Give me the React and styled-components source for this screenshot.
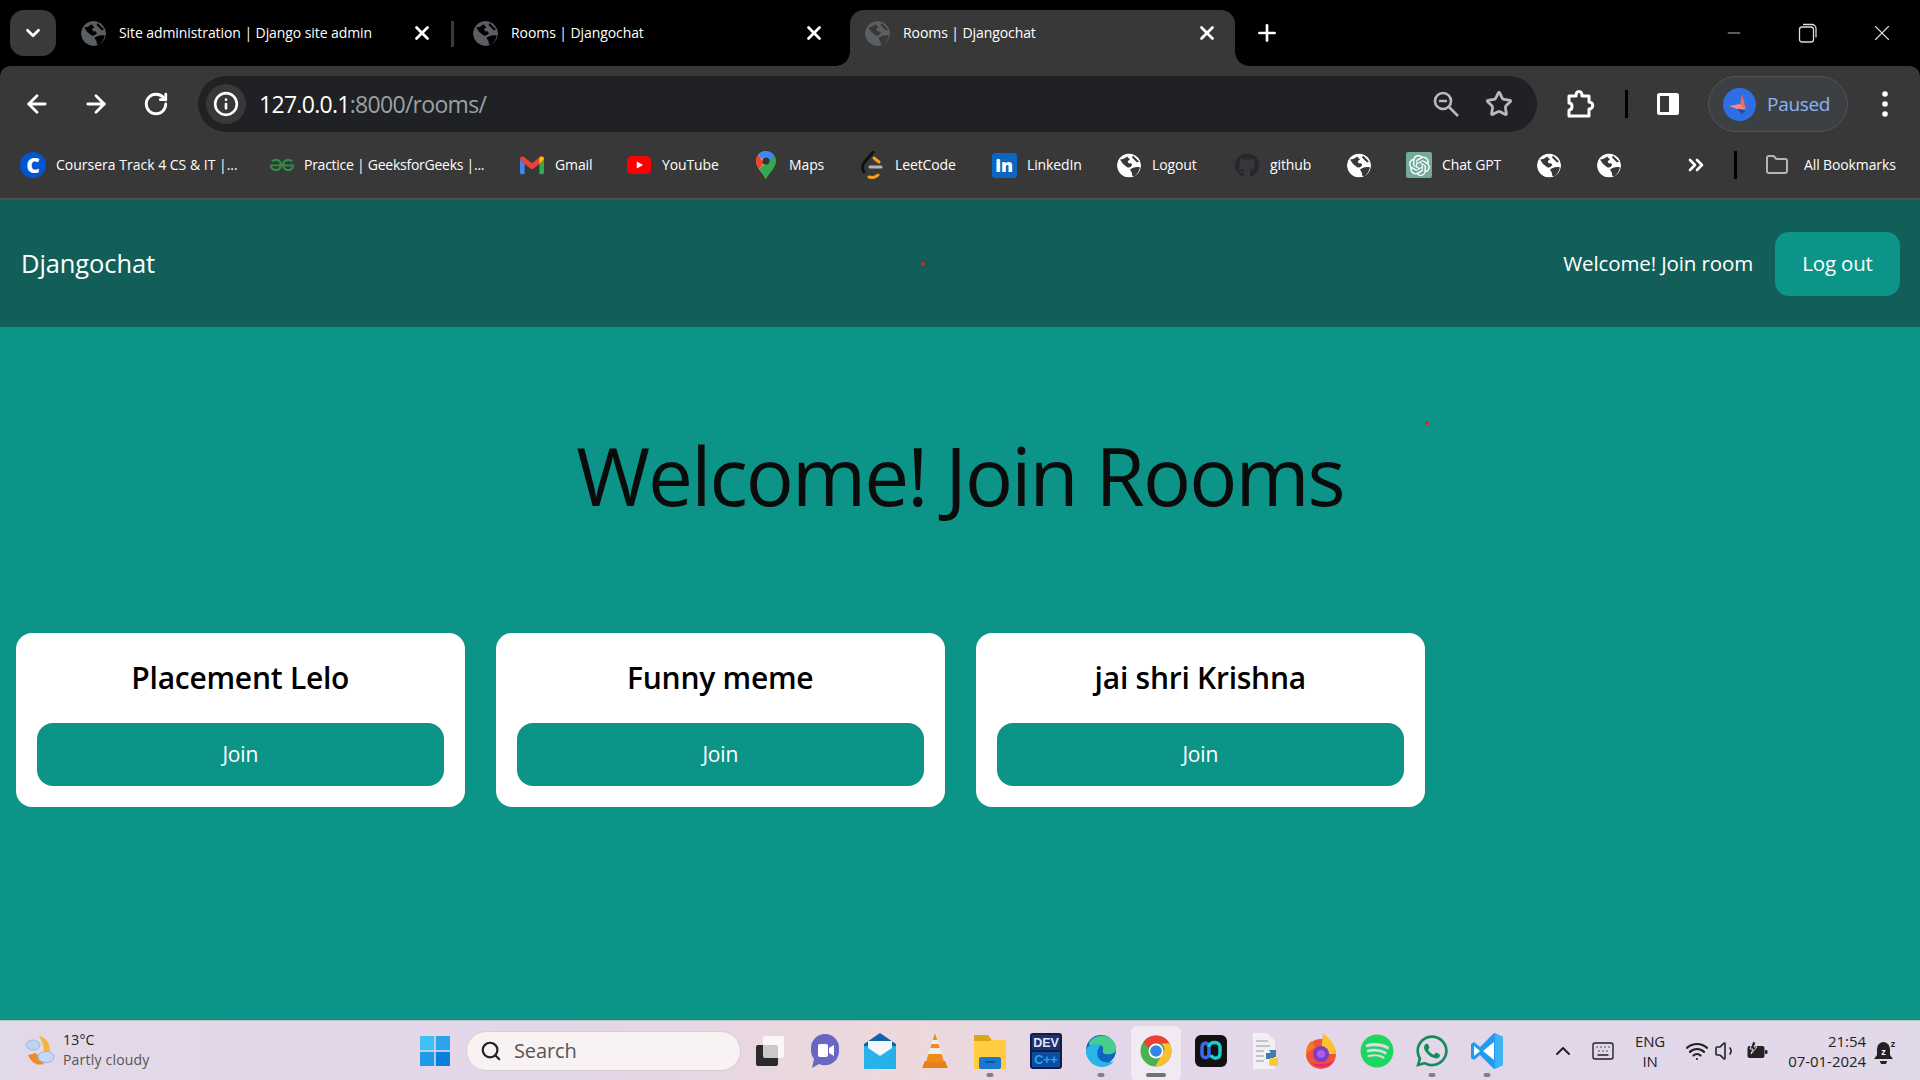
import React from 'react';
import styled, { createGlobalStyle } from 'styled-components';
import { FaGithub, FaWhatsapp, FaSpotify } from 'react-icons/fa6';
import { SiOpenai, SiGeeksforgeeks } from 'react-icons/si';
import { LuArrowLeft, LuArrowRight, LuRotateCw, LuX, LuPlus, LuMinus, LuSearch, LuStar, LuChevronsRight, LuFolder, LuChevronDown, LuChevronUp, LuInfo, LuVolume1, LuWifi, LuKeyboard } from 'react-icons/lu';

const UI = '"Open Sans", "Noto Sans", sans-serif';
const Global = createGlobalStyle`
  html, body { margin: 0; padding: 0; width: 1920px; height: 1080px; overflow: hidden; background: #000; }
  * { box-sizing: border-box; }
  body { font-family: ${UI}; }
`;
const Screen = styled.div`display:flex;flex-direction:column;width:1920px;height:1080px;position:relative;overflow:hidden;background:#000;`;
const TabStrip = styled.div`display:flex;align-items:flex-start;height:66px;background:#000;padding:10px 0 0 10px;flex:none;`;
const TabMenu = styled.div`width:46px;height:46px;border-radius:14px;background:#3a3a3a;color:#fff;display:flex;align-items:center;justify-content:center;margin-right:10px;flex:none;`;
const Tab = styled.div`
  width:${p => p.$w}px;height:56px;display:flex;align-items:center;padding:0 ${p => p.$active ? 17 : 25}px 10px 15px;color:#fff;font:14px/1 ${UI};letter-spacing:-.08px;flex:none;position:relative;
  background:${p => p.$active ? '#383838' : 'transparent'};border-radius:14px 14px 0 0;
  ${p => p.$sep ? `&::after{content:"";position:absolute;right:4px;top:11px;width:3px;height:26px;background:#3a3a3a;}` : ''}
  ${p => p.$active ? `
    &::before{content:"";position:absolute;left:-14px;bottom:0;width:14px;height:14px;background:radial-gradient(circle at 0 0,transparent 13.5px,#383838 14px);}
    &::after{content:"";position:absolute;right:-14px;bottom:0;width:14px;height:14px;background:radial-gradient(circle at 100% 0,transparent 13.5px,#383838 14px);}
  ` : ''}
`;
const TabIcon = styled.span`display:flex;color:#5b5e63;margin-right:13px;flex:none;`;
const TabTitle = styled.span`flex:1;white-space:nowrap;`;
const TabNew = styled.div`width:64px;height:46px;display:flex;align-items:center;justify-content:center;color:#fff;`;
const WindowControls = styled.div`display:flex;margin-left:auto;height:46px;align-items:center;color:#ddd;padding-right:1px;`;
const WinBtn = styled.div`width:74px;display:flex;justify-content:center;`;
const Toolbar = styled.div`height:66px;background:#383838;border-radius:10px 10px 0 0;display:flex;align-items:flex-start;padding:10px 0 0 7px;flex:none;`;
const NavIcon = styled.div`width:59.500px;height:56px;display:flex;align-items:center;justify-content:center;color:#fff;flex:none;`;
const Omni = styled.div`margin-left:12.500px;width:1339px;height:56px;background:#202124;border-radius:28px;display:flex;align-items:center;padding:0 12px 0 8px;flex:none;`;
const InfoBadge = styled.div`width:40px;height:40px;border-radius:50%;background:#383838;display:flex;align-items:center;justify-content:center;color:#fff;flex:none;`;
const Url = styled.div`margin-left:13px;font:23px/1 ${UI};letter-spacing:-.7px;color:#fff;flex:1;span{color:#9aa0a6;}`;
const OmniIcon = styled.div`width:53px;display:flex;justify-content:center;color:#b9b9b9;flex:none;`;
const ToolIcon = styled.div`width:${p => p.$w || 44}px;height:56px;display:flex;align-items:center;justify-content:center;color:#fff;flex:none;`;
const ToolSep = styled.div`width:3px;height:28px;background:#000;flex:none;margin-top:14px;`;
const BarSep = styled.div`width:3px;height:28px;background:#000;flex:none;`;
const Paused = styled.div`width:140px;height:56px;border-radius:28px;background:#3c4043;border:1.5px solid #50535a;display:flex;align-items:center;padding-left:14px;gap:11px;color:#8ab4f8;font:19px/1 ${UI};letter-spacing:-.3px;flex:none;`;
const Avatar = styled.div`width:33px;height:33px;border-radius:50%;background:#2f6fe4;display:flex;align-items:center;justify-content:center;flex:none;`;
const Bookmarks = styled.div`height:68px;background:#383838;border-bottom:2px solid #4f4f4f;display:flex;align-items:center;padding-left:21px;flex:none;`;
const Mark = styled.div`display:flex;align-items:center;gap:${p => p.$gap ?? 11}px;width:${p => p.$w}px;margin-left:${p => p.$ml || 0}px;flex:none;color:#fff;font:14px/1 ${UI};letter-spacing:${p => p.$ls ?? -0.12}px;white-space:nowrap;`;
const MarkIcon = styled.span`width:24px;height:24px;display:flex;align-items:center;justify-content:center;color:${p => p.$c || '#fff'};flex:none;`;
const Tile = styled.span`min-width:${p => p.$s || 24}px;height:${p => p.$s || 24}px;display:flex;align-items:center;justify-content:center;background:${p => p.$bg};border-radius:${p => p.$r || 3}px;color:#fff;font:800 ${p => p.$f || 17}px/1 ${UI};`;
const Nav = styled.header`height:127px;background:#125f5a;display:flex;align-items:center;padding:0 20px 0 21px;color:#fff;flex:none;`;
const Brand = styled.div`font:25.500px/1 ${UI};letter-spacing:-.1px;flex:1;`;
const NavLink = styled.div`font:20.500px/1 ${UI};letter-spacing:-.12px;margin-right:22px;`;
const LogOut = styled.div`width:125px;height:64px;background:#0d9488;border-radius:14px;display:flex;align-items:center;justify-content:center;font:20.500px/1 ${UI};letter-spacing:-.2px;`;
const Main = styled.main`flex:1;background:#0d9488;display:flex;flex-direction:column;padding:0 16px;`;
const Heading = styled.h1`margin:108px 0 0;height:198px;text-align:center;font:400 80px/1 ${UI};letter-spacing:-1.9px;color:#0b0b0b;`;
const Grid = styled.div`display:grid;grid-template-columns:repeat(4,448.500px);gap:31.500px;`;
const Card = styled.div`background:#fff;border-radius:16px;padding:20px 21px;height:174px;display:flex;flex-direction:column;`;
const CardTitle = styled.h2`margin:0;height:70px;text-align:center;font:600 30px/49px ${UI};letter-spacing:-.25px;color:#000;`;
const Join = styled.div`height:63px;border-radius:16px;background:#0d9488;color:#fff;display:flex;align-items:center;justify-content:center;font:21px/1 ${UI};letter-spacing:-.2px;`;
const Dot = styled.i`position:absolute;left:${p => p.$x}px;top:${p => p.$y}px;width:4px;height:4px;border-radius:50%;background:#d8222a;`;
const Taskbar = styled.footer`height:60px;background:linear-gradient(90deg,#e2d9e8 0%,#e3d6e8 30%,#edd9dc 47%,#e3d6e8 58%,#e1d8e8 100%);border-top:1px solid #b9c2c2;display:flex;align-items:center;position:relative;flex:none;`;
const Weather = styled.div`width:418px;padding-left:25px;display:flex;gap:6px;align-items:center;flex:none;`;
const WeatherText = styled.div`font:14px/20px ${UI};letter-spacing:.2px;color:#222;margin-top:-2px;small{display:block;font-size:14px;color:#555;}`;
const WinLogo = styled.div`width:33px;height:60px;display:flex;align-items:center;justify-content:center;flex:none;`;
const Search = styled.div`width:275px;height:40px;border-radius:20px;background:#f8f2f3;border:1px solid #d7cdd3;display:flex;align-items:center;gap:12px;padding-left:13px;color:#555;font:20px/1 ${UI};letter-spacing:-.1px;margin-left:15px;flex:none;`;
const Dock = styled.div`display:flex;margin-left:1px;flex:none;`;
const DockItem = styled.div`width:55.200px;height:60px;display:flex;align-items:center;justify-content:center;position:relative;flex:none;`;
const ActiveBg = styled.div`position:absolute;inset:5px 3px 0 3px;background:#f1eaf2;border-radius:6px;`;
const DockGlyph = styled.span`position:relative;display:flex;`;
const Indicator = styled.b`position:absolute;bottom:4px;left:50%;transform:translateX(-50%);width:${p => p.$wide ? 20 : 7}px;height:4px;border-radius:2px;background:${p => p.$wide ? '#6d7478' : '#7d8286'};`;
const Tray = styled.div`position:absolute;right:22px;top:0;height:60px;display:flex;align-items:center;color:#222;font:15px/20px ${UI};`;
const TrayIcon = styled.div`width:${p => p.$w}px;display:flex;justify-content:center;flex:none;`;
const Lang = styled.div`width:64px;text-align:center;letter-spacing:-.2px;flex:none;`;
const Clock = styled.div`width:92px;text-align:right;flex:none;letter-spacing:-.05px;margin-right:6px;`;
const Bell = styled.div`width:26px;display:flex;justify-content:center;flex:none;`;

const Globe = ({ size = 25, id = 'g' }) => (
  <svg width={size} height={size} viewBox="0 0 24 24">
    <mask id={id}>
      <circle cx="12" cy="12" r="12" fill="#fff" />
      <path d="M3 6c3 0 5-1 7-3l3 3c-2 1-3 2-1 4 3-1 4 2 2 3-2 2-4 1-6-1-2-1-3-3-5-6zM13 16c3-2 6-3 10-2-1 4-3 7-6 9-2 0-2-2-2-3s-1-2-2-4zM16 2l6 6-2 1-2-2-3-3z" fill="#000" />
    </mask>
    <circle cx="12" cy="12" r="12" fill="currentColor" mask={`url(#${id})`} />
  </svg>
);
const Win = () => <svg width="30" height="30" viewBox="0 0 30 30"><rect width="14.200" height="14.200" fill="#3fc0f5"/><rect x="15.800" width="14.200" height="14.200" fill="#2aa5ec"/><rect y="15.800" width="14.200" height="14.200" fill="#1b9be8"/><rect x="15.800" y="15.800" width="14.200" height="14.200" fill="#0a7fdc"/></svg>;
const Gmail = () => <svg width="26" height="22" viewBox="0 0 26 20"><path d="M0 4v14q0 2 2 2h3V9z" fill="#4285f4"/><path d="M26 4v14q0 2-2 2h-3V9z" fill="#34a853"/><path d="M5 9 0 4q0-4 4-3l9 7 9-7q4-1 4 3l-5 5-8 6z" fill="#ea4335"/><path d="M21 9l5-5q0-4-4-3l-1 .8z" fill="#fbbc04"/></svg>;
const Youtube = () => <svg width="27" height="20" viewBox="0 0 27 20"><rect width="27" height="20" rx="5" fill="#f00"/><path d="M11 6l7 4-7 4z" fill="#fff"/></svg>;
const Maps = () => <svg width="22" height="28" viewBox="0 0 22 28"><path d="M11 28C8 22 1 17 1 10A10 10 0 0 1 11 0z" fill="#fbbc04"/><path d="M11 28c3-6 10-11 10-18 0-2-.6-4-1.700-5.500L4 18c3 4 6 7 7 10z" fill="#34a853"/><path d="M11 0a10 10 0 0 1 8.300 4.500L14 10a3.500 3.500 0 0 0-3-3.500L7 3z" fill="#4285f4"/><path d="M11 0A10 10 0 0 0 3 4l4 4 4-2z" fill="#4285f4"/><path d="M3 4a10 10 0 0 0-2 6c0 3 1.500 6 3 8l5-6-3-4z" fill="#ea4335"/><circle cx="11" cy="10" r="3.500" fill="#333"/></svg>;
const Leet = () => <svg width="24" height="28" viewBox="0 0 24 28" fill="none" strokeLinecap="round"><path d="M13 1 4 12c-2 3-2 6 0 9" stroke="#111" strokeWidth="3"/><path d="M14 7l5 4" stroke="#f89f1b" strokeWidth="3"/><path d="M9 26c3 1 6 1 9-2" stroke="#f89f1b" strokeWidth="3"/><path d="M10 16h11" stroke="#b3b3b3" strokeWidth="3"/></svg>;
const Puzzle = () => <svg width="30" height="32" viewBox="0 0 30 32" fill="none" stroke="#fff" strokeWidth="3" strokeLinejoin="round"><path d="M3 8h7c0-6 6-6 6 0h7v6c5 0 5 7 0 7v7H3v-6c4 0 4-7 0-7z"/></svg>;
const ZoomOut = () => <svg width="28" height="28" viewBox="0 0 28 28" fill="none" stroke="#b9b9b9" strokeWidth="2.600"><circle cx="11" cy="11" r="8"/><path d="M7 11h8M17 17l9 9"/></svg>;
const Dots = () => <svg width="10" height="28" viewBox="0 0 10 28" fill="#fff"><circle cx="5" cy="4" r="2.800"/><circle cx="5" cy="14" r="2.800"/><circle cx="5" cy="24" r="2.800"/></svg>;
const Butterfly = () => <svg width="26" height="26" viewBox="0 0 26 26"><path d="M15 3l4 15-6-3z" fill="#f2685c"/><path d="M2 15l11-2 6 6-9-1z" fill="#f58a7c"/><path d="M10 18l9 1-4 4z" fill="#1c49a8"/></svg>;
const Split = () => <svg width="24" height="24" viewBox="0 0 24 24"><rect x="1" y="1" width="22" height="22" rx="2.500" fill="#fff"/><rect x="4" y="4" width="9" height="16" fill="#383838"/></svg>;
const Weath = () => <svg width="32" height="36" viewBox="0 0 32 36"><path d="M14 3c14 2 16 26-3 29C22 26 20 12 14 3z" fill="#f5b53a"/><path d="M3 22c3 8 10 11 16 9L11 20z" fill="#ec8b2c"/><ellipse cx="8" cy="12" rx="7" ry="5" fill="#bcd4f0" stroke="#9bbbe0"/><ellipse cx="21" cy="24" rx="8" ry="5.500" fill="#c4daf3" stroke="#94b7e0"/></svg>;
const TaskView = () => <svg width="30" height="32" viewBox="0 0 30 32"><rect x="1" y="10" width="22" height="21" rx="2" fill="#2a2a2a"/><rect x="8" y="1" width="21" height="22" rx="2" fill="#fff" fillOpacity=".75"/></svg>;
const Chat = () => <svg width="30" height="36" viewBox="0 0 30 36"><path d="M15 1a14 14 0 0 1 14 14v4a14 14 0 0 1-20 12l-7 4 2-9a14 14 0 0 1-3-7v-4A14 14 0 0 1 15 1z" fill="#6a67c4"/><rect x="8" y="11" width="10" height="13" rx="2" fill="#fff"/><path d="M19 15l5-3v11l-5-3z" fill="#fff"/></svg>;
const Mail = () => <svg width="32" height="36" viewBox="0 0 32 36"><path d="M16 0l16 11v25H0V11z" fill="#0f62ab"/><path d="M0 13h32v23H0z" fill="#25aee8"/><path d="M4 8h24v7L16 23 4 15z" fill="#f3f7fb"/><path d="M0 13l16 11 16-11v4L16 36H0z" fill="#2bb6ef" fillOpacity=".5"/></svg>;
const Vlc = () => <svg width="28" height="36" viewBox="0 0 28 36"><path d="M1 35l3-7h20l3 7z" fill="#e8801a"/><path d="M14 0l9 29H5z" fill="#f08a1d"/><path d="M9 15h10l2 6H7z" fill="#eee"/><path d="M11.500 7h5l1.500 4h-8z" fill="#eee"/></svg>;
const Files = () => <svg width="32" height="36" viewBox="0 0 32 36"><path d="M0 2h14l4 5h14v29H0z" fill="#ffcd3f"/><path d="M0 2h14l3 4v2H0z" fill="#dea415"/><rect x="5" y="24" width="22" height="12" rx="2" fill="#1a78d0"/><rect x="11" y="28" width="10" height="2" fill="#0a4f9c"/></svg>;
const DevCpp = () => <svg width="32" height="36" viewBox="0 0 32 36"><rect width="32" height="36" rx="3" fill="#101d49"/><rect x="2" y="2" width="28" height="15" fill="#1e2f6e"/><rect x="2" y="19" width="28" height="15" fill="#0b4ea0"/><text x="16" y="14" textAnchor="middle" fontFamily="Liberation Sans, sans-serif" fontWeight="700" fontSize="12.500" fill="#dfe6f5">DEV</text><text x="16" y="31" textAnchor="middle" fontFamily="Liberation Sans, sans-serif" fontWeight="700" fontSize="12.500" fill="#25a4ef">C++</text></svg>;
const Edge = () => <svg width="32" height="34" viewBox="0 0 32 34"><circle cx="16" cy="16" r="15" fill="#0c66c0"/><path d="M4 9C8 1 22-2 29 8c4 6 2 11-3 12-5 1-9 0-8-4 1-4-3-6-7-5-4 1-6 3-7-2z" fill="#46cf8b"/><path d="M1 17c0 9 8 17 18 16 5-1 8-3 10-6-7 3-14 1-16-4-2-6 1-10 3-12C9 9 1 11 1 17z" fill="#2bb4e8"/></svg>;
const Chrome = () => <svg width="32" height="32" viewBox="0 0 32 32"><circle cx="16" cy="16" r="15.500" fill="#4caf50"/><path d="M16 .5A15.500 15.500 0 0 1 29.500 8.500H16a7.500 7.500 0 0 0-7 4.700L3.200 7.200A15.500 15.500 0 0 1 16 .5z" fill="#ea4335"/><path d="M29.500 8.500A15.500 15.500 0 0 1 15 31.500l6.500-11a7.500 7.500 0 0 0 0-12z" fill="#fbc02d"/><circle cx="16" cy="16" r="7.500" fill="#fff"/><circle cx="16" cy="16" r="5.800" fill="#3b82e8"/></svg>;
const Wave = () => <svg width="32" height="32" viewBox="0 0 32 32"><rect width="32" height="32" rx="6" fill="#111"/><path d="M7 12c0-5 7-5 7 0v7c0 5-7 5-7 0z" fill="none" stroke="#3a68ee" strokeWidth="3.500"/><path d="M14 12c0-6 11-6 11 0v6c0 7-8 6-9 2" fill="none" stroke="#22c9cc" strokeWidth="3.500"/></svg>;
const PyFile = () => <svg width="30" height="36" viewBox="0 0 30 36"><path d="M2 0h14l8 8v28H2z" fill="#f1f0f2"/><path d="M5 8h12M5 13h14M5 18h8M5 23h8M5 28h8" stroke="#c4c4c8" strokeWidth="2"/><path d="M15 20h8v6h-8zM18 17h7v7h-3z" fill="#3f7cae"/><path d="M19 25h8v5a3 3 0 0 1-3 3h-4a2 2 0 0 1-2-2z" fill="#f4c93b"/></svg>;
const Firefox = () => <svg width="32" height="36" viewBox="0 0 32 36"><ellipse cx="16" cy="21" rx="15" ry="15" fill="#f0523a"/><path d="M18 0c5 4 13 11 13 21H16z" fill="#fcc12e"/><path d="M1 21C1 15 3 10 7 8l3 6z" fill="#f57a25"/><circle cx="16" cy="21" r="8" fill="#7c3dc7"/><circle cx="16" cy="21" r="4" fill="#b15de0"/><path d="M6 30c6 6 18 6 23-2-6 3-15 4-23 2z" fill="#e92a6a"/></svg>;
const Code = () => <svg width="32" height="36" viewBox="0 0 32 36"><path d="M23 0l9 4v28l-9 4-14-14-6 5-3-2v-14l3-2 6 5z" fill="#1f9cf0"/><path d="M23 9 12 18l11 9z" fill="#fff"/><path d="M24 0v36l8-4V4z" fill="#3fb1f5"/><path d="M3 13l6 5-6 5z" fill="#fff"/></svg>;
const Battery = () => <svg width="22" height="20" viewBox="0 0 22 20" fill="none"><rect x="1.500" y="5" width="17" height="12" rx="2" fill="#222"/><rect x="19" y="9" width="2.500" height="4" rx="1" fill="#222"/><path d="M7 0 4 8h3L5 13l6-7H8l2-4z" fill="#222" stroke="#e3d6e8"/></svg>;
const Bella = () => <svg width="24" height="26" viewBox="0 0 24 26"><path d="M10 4a7 7 0 0 1 7 7v6l3 4H1l3-4v-6a7 7 0 0 1 6-7z" fill="#222"/><path d="M7 23h7a3.500 3.500 0 0 1-7 0z" fill="#222"/><text x="10.500" y="17" textAnchor="middle" fontSize="9" fontWeight="700" fill="#fff" fontFamily="Liberation Sans, sans-serif">z</text><text x="20" y="9" textAnchor="middle" fontSize="9" fontWeight="700" fill="#222" fontFamily="Liberation Sans, sans-serif">z</text></svg>;

const tabs = [
  { t: 'Site administration | Django site admin', w: 392, sep: true },
  { t: 'Rooms | Djangochat', w: 392, sep: false },
  { t: 'Rooms | Djangochat', w: 385, active: true },
];
const rooms = ['Placement Lelo', 'Funny meme', 'jai shri Krishna'];
const dock = [
  [TaskView], [Chat], [Mail], [Vlc], [Files, 'dot'], [DevCpp], [Edge, 'dot'], [Chrome, 'active'], [Wave], [PyFile], [Firefox],
  [() => <FaSpotify size={34} color="#1ed760" />], [() => <FaWhatsapp size={36} color="#128c5a" />, 'dot'], [Code, 'dot'],
];

export default function App() {
  return (
    <Screen>
      <Global />
      <TabStrip>
        <TabMenu><LuChevronDown size={22} strokeWidth={3} /></TabMenu>
        {tabs.map((t, i) => (
          <Tab key={i} $w={t.w} $active={t.active} $sep={t.sep}>
            <TabIcon><Globe size={25} id={`t${i}`} /></TabIcon>
            <TabTitle>{t.t}</TabTitle>
            <LuX size={22} strokeWidth={3} />
          </Tab>
        ))}
        <TabNew><LuPlus size={26} strokeWidth={2.5} /></TabNew>
        <WindowControls>
          <WinBtn><LuMinus size={20} strokeWidth={1} /></WinBtn>
          <WinBtn><svg width="20" height="20" viewBox="0 0 20 20" fill="none" stroke="#ddd" strokeWidth="1.300"><rect x="1.500" y="4" width="14" height="15" rx="2.500"/><path d="M5 1.500h9a4 4 0 0 1 4 4v9"/></svg></WinBtn>
          <WinBtn><LuX size={26} strokeWidth={1} /></WinBtn>
        </WindowControls>
      </TabStrip>
      <Toolbar>
        <NavIcon><LuArrowLeft size={28} strokeWidth={2.400} /></NavIcon>
        <NavIcon><LuArrowRight size={28} strokeWidth={2.400} /></NavIcon>
        <NavIcon><LuRotateCw size={26} strokeWidth={2.600} /></NavIcon>
        <Omni>
          <InfoBadge><LuInfo size={26} strokeWidth={2.400} /></InfoBadge>
          <Url>127.0.0.1<span>:8000/rooms/</span></Url>
          <OmniIcon><ZoomOut /></OmniIcon>
          <OmniIcon><LuStar size={28} strokeWidth={2.400} /></OmniIcon>
        </Omni>
        <ToolIcon $w={88}><Puzzle /></ToolIcon>
        <ToolSep />
        <ToolIcon $w={80}><Split /></ToolIcon>
        <Paused><Avatar><Butterfly /></Avatar>Paused</Paused>
        <ToolIcon $w={74}><Dots /></ToolIcon>
      </Toolbar>
      <Bookmarks>
        <Mark $w={249} $ls={0}><MarkIcon><Tile $bg="#0056d2" $r={13} $s={26} $f={21}>C</Tile></MarkIcon>Coursera Track 4 CS &amp; IT |...</Mark>
        <Mark $w={250} $gap={10} $ls={-0.26}><MarkIcon $c="#2f8d46"><SiGeeksforgeeks size={26} /></MarkIcon>Practice | GeeksforGeeks |...</Mark>
        <Mark $w={107}><MarkIcon><Gmail /></MarkIcon>Gmail</Mark>
        <Mark $w={127}><MarkIcon><Youtube /></MarkIcon>YouTube</Mark>
        <Mark $w={106}><MarkIcon><Maps /></MarkIcon>Maps</Mark>
        <Mark $w={132}><MarkIcon><Leet /></MarkIcon>LeetCode</Mark>
        <Mark $w={125}><MarkIcon><Tile $bg="#0a66c2" $s={25} $f={18}>in</Tile></MarkIcon>LinkedIn</Mark>
        <Mark $w={118}><MarkIcon><Globe id="b1" /></MarkIcon>Logout</Mark>
        <Mark $w={112}><MarkIcon $c="#24292f"><FaGithub size={27} /></MarkIcon>github</Mark>
        <Mark $w={60}><MarkIcon><Globe id="b2" /></MarkIcon></Mark>
        <Mark $w={130}><MarkIcon><Tile $bg="#74aa9c" $r={2} $s={26}><SiOpenai size={21} /></Tile></MarkIcon>Chat GPT</Mark>
        <Mark $w={60}><MarkIcon><Globe id="b3" /></MarkIcon></Mark>
        <Mark $w={87}><MarkIcon><Globe id="b4" /></MarkIcon></Mark>
        <Mark $w={50}><MarkIcon><LuChevronsRight size={26} strokeWidth={2.600} /></MarkIcon></Mark>
        <BarSep />
        <Mark $w={150} $gap={15} $ml={28}><MarkIcon $c="#b5b5b5"><LuFolder size={28} strokeWidth={2} /></MarkIcon>All Bookmarks</Mark>
      </Bookmarks>
      <Nav>
        <Brand>Djangochat</Brand>
        <NavLink>Welcome! Join room</NavLink>
        <LogOut>Log out</LogOut>
      </Nav>
      <Main>
        <Heading>Welcome! Join Rooms</Heading>
        <Grid>
          {rooms.map(r => (
            <Card key={r}>
              <CardTitle>{r}</CardTitle>
              <Join>Join</Join>
            </Card>
          ))}
        </Grid>
      </Main>
      <Taskbar>
        <Weather><Weath /><WeatherText>13°C<small>Partly cloudy</small></WeatherText></Weather>
        <WinLogo><Win /></WinLogo>
        <Search><LuSearch size={22} strokeWidth={2.400} color="#222" />Search</Search>
        <Dock>
          {dock.map(([G, f], i) => (
            <DockItem key={i}>
              {f === 'active' && <ActiveBg />}
              <DockGlyph><G /></DockGlyph>
              {f && <Indicator $wide={f === 'active'} />}
            </DockItem>
          ))}
        </Dock>
        <Tray>
          <TrayIcon $w={50}><LuChevronUp size={24} strokeWidth={2} /></TrayIcon>
          <TrayIcon $w={30}><LuKeyboard size={24} strokeWidth={1.400} /></TrayIcon>
          <Lang>ENG<br />IN</Lang>
          <TrayIcon $w={30}><LuWifi size={24} strokeWidth={2.200} /></TrayIcon>
          <TrayIcon $w={28}><LuVolume1 size={24} strokeWidth={1.600} /></TrayIcon>
          <TrayIcon $w={34}><Battery /></TrayIcon>
          <Clock>21:54<br />07-01-2024</Clock>
          <Bell><Bella /></Bell>
        </Tray>
      </Taskbar>
      <Dot $x={921} $y={262} />
      <Dot $x={1425} $y={421} />
    </Screen>
  );
}
